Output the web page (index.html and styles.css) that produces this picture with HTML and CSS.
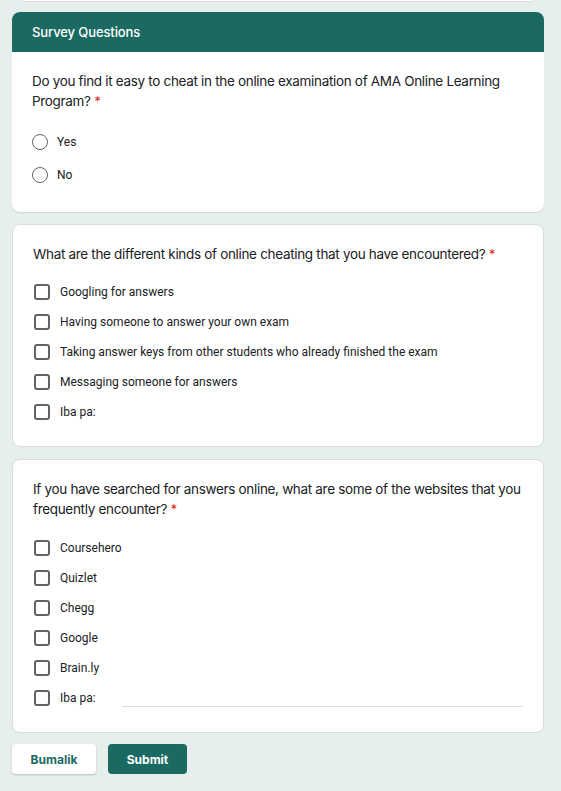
FILE: index.html
```html
<!DOCTYPE html>
<html>
<head>
<meta charset="utf-8">
<link rel="stylesheet" href="styles.css">
</head>
<body>
<div class="page">
  <div class="prev-card"></div>

  <div class="card card-first">
    <div class="card-header">Survey Questions</div>
    <div class="card-body">
      <div class="question">Do you find it easy to cheat in the online examination of AMA Online Learning Program? <span class="req">*</span></div>
      <div class="options radio-list">
        <label class="option radio-row"><span class="radio"></span><span class="opt-text">Yes</span></label>
        <label class="option radio-row"><span class="radio"></span><span class="opt-text">No</span></label>
      </div>
    </div>
  </div>

  <div class="card bordered">
    <div class="card-body">
      <div class="question">What are the different kinds of online cheating that you have encountered? <span class="req">*</span></div>
      <div class="options">
        <label class="option"><span class="check"></span><span class="opt-text">Googling for answers</span></label>
        <label class="option"><span class="check"></span><span class="opt-text">Having someone to answer your own exam</span></label>
        <label class="option"><span class="check"></span><span class="opt-text">Taking answer keys from other students who already finished the exam</span></label>
        <label class="option"><span class="check"></span><span class="opt-text">Messaging someone for answers</span></label>
        <label class="option"><span class="check"></span><span class="opt-text">Iba pa:</span></label>
      </div>
    </div>
  </div>

  <div class="card bordered">
    <div class="card-body">
      <div class="question">If you have searched for answers online, what are some of the websites that you frequently encounter? <span class="req">*</span></div>
      <div class="options options-wide">
        <label class="option"><span class="check"></span><span class="opt-text">Coursehero</span></label>
        <label class="option"><span class="check"></span><span class="opt-text">Quizlet</span></label>
        <label class="option"><span class="check"></span><span class="opt-text">Chegg</span></label>
        <label class="option"><span class="check"></span><span class="opt-text">Google</span></label>
        <label class="option"><span class="check"></span><span class="opt-text">Brain.ly</span></label>
        <label class="option"><span class="check"></span><span class="opt-text">Iba pa:</span><span class="other-input"></span></label>
      </div>
    </div>
  </div>

  <div class="actions">
    <button class="btn btn-back">Bumalik</button>
    <button class="btn btn-submit">Submit</button>
  </div>
</div>
</body>
</html>
```
FILE: styles.css
```css
html, body {
  margin: 0;
  padding: 0;
  background: #e7efee;
}
body {
  font-family: Inter, "Open Sans", sans-serif;
  color: #202124;
}
.page {
  width: 532px;
  margin-left: 12px;
  padding-bottom: 20px;
}
.prev-card {
  height: 20px;
  margin: -20px 4px 10px 4px;
  background: #fff;
  border: 1px solid #dadce0;
  border-radius: 8px;
}
.card {
  background: #fff;
  border-radius: 8px;
  margin-bottom: 12px;
  box-shadow: 0 1px 1px rgba(60,64,67,0.15);
  overflow: hidden;
}
.card.bordered {
  border: 1px solid #dadce0;
  box-shadow: none;
}
.card-header {
  background: #1b6a62;
  color: #fff;
  height: 40px;
  line-height: 40px;
  padding-left: 20px;
  font-size: 13px;
  font-weight: 500;
  letter-spacing: -0.1px;
}
.card-body {
  padding: 19px 20px 19px 20px;
}
.card-first .card-body {
  padding-bottom: 21px;
}
.question {
  font-size: 13.5px;
  line-height: 20px;
  letter-spacing: -0.32px;
}
.req {
  color: #d93025;
}
.options {
  margin-top: 13px;
  display: flex;
  flex-direction: column;
}
.options-wide {
  margin-top: 14px;
}
.radio-list {
  margin-top: 14px;
}
.option {
  display: flex;
  align-items: center;
  height: 30px;
  font-family: Roboto, "Liberation Sans", sans-serif;
  font-size: 12px;
}
.radio-row {
  height: 33px;
}
.check {
  width: 12px;
  height: 12px;
  border: 2px solid #5f6368;
  border-radius: 3px;
  margin-left: 1px;
  margin-right: 10px;
  flex: none;
}
.radio {
  width: 14px;
  height: 14px;
  border: 1.5px solid #5f6368;
  border-radius: 50%;
  margin-right: 9px;
  flex: none;
}
.opt-text {
  color: #202124;
}
.other-input {
  flex: 1;
  align-self: flex-end;
  margin-left: 26px;
  margin-bottom: 6px;
  border-bottom: 1px solid #dadce0;
}
.actions {
  display: flex;
  gap: 12px;
  margin-top: -1px;
}
.btn {
  height: 30px;
  border-radius: 4px;
  font-family: Inter, "Open Sans", sans-serif;
  font-size: 12px;
  font-weight: 700;
  cursor: pointer;
}
.btn-back {
  width: 84px;
  background: #fff;
  color: #1b6a62;
  border: none;
  box-shadow: 0 1px 2px rgba(60,64,67,0.3);
}
.btn-submit {
  width: 79px;
  background: #1b6a62;
  color: #fff;
  border: none;
}
```
